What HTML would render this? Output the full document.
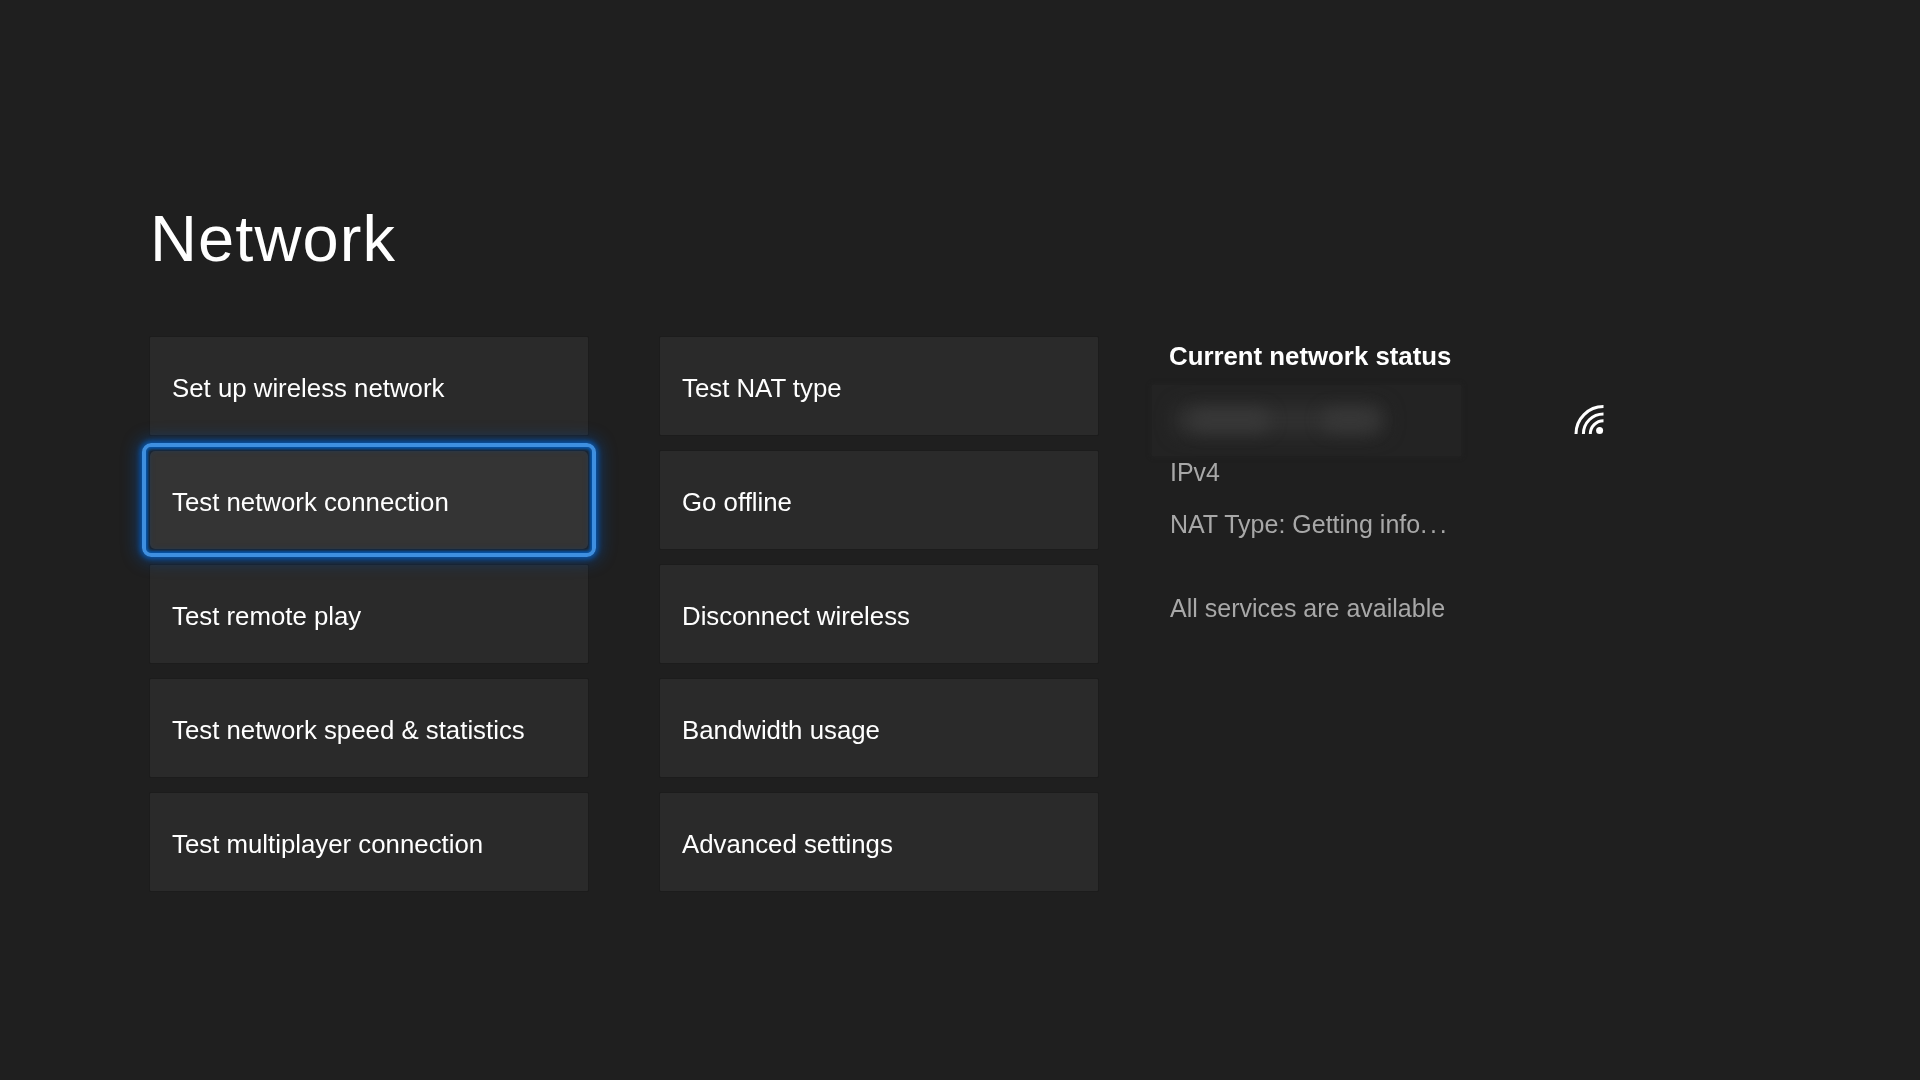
<!DOCTYPE html>
<html>
<head>
<meta charset="utf-8">
<style>
html,body{margin:0;padding:0;}
body{width:1920px;height:1080px;background:#1f1f1f;position:relative;overflow:hidden;font-family:"Liberation Sans",sans-serif;color:#fff;}
.t{position:absolute;white-space:nowrap;line-height:1;will-change:transform;}
.title{left:150px;top:205.5px;font-size:65px;letter-spacing:1.1px;}
.btn{position:absolute;width:438px;height:98px;background:#2a2a2a;border-radius:1px;box-shadow:0 0 0 1px #1c1c1c;}
.btn span{position:absolute;will-change:transform;left:22px;top:38.5px;font-size:25.8px;line-height:1;white-space:nowrap;}
.c1{left:150px;}
.c2{left:660px;}
.r1{top:337px}.r2{top:451px}.r3{top:565px}.r4{top:679px}.r5{top:793px}
.focus{background:#343434;border-radius:5px;}
.ring{position:absolute;left:142px;top:443px;width:446px;height:106px;border:4px solid #3e8fe0;border-radius:9px;box-shadow:0 0 5px 2px rgba(0,100,210,.7), 0 0 16px 5px rgba(0,85,180,.45), inset 0 0 3px 2px rgba(0,95,195,.85), inset 0 0 6px 3px rgba(0,75,160,.3);}
.hdr{left:1169px;top:344px;font-size:25.8px;font-weight:bold;}
.blurbox{position:absolute;left:1152px;top:385px;width:309px;height:71px;background:#232323;box-shadow:0 0 4px 1px #232323;}
.blob{position:absolute;left:22px;top:20px;width:212px;height:30px;background:#303030;filter:blur(9px);border-radius:10px;}
.blob2{position:absolute;left:38px;top:24px;width:80px;height:22px;background:#383838;filter:blur(8px);border-radius:10px;}
.blob3{position:absolute;left:170px;top:24px;width:55px;height:22px;background:#373737;filter:blur(8px);border-radius:10px;}
.gray{color:#a8a8a8;font-size:25px;}
</style>
</head>
<body>
<div class="t title">Network</div>

<div class="btn c1 r1"><span>Set up wireless network</span></div>
<div class="btn c1 r2 focus"><span>Test network connection</span></div>
<div class="btn c1 r3"><span>Test remote play</span></div>
<div class="btn c1 r4"><span>Test network speed &amp; statistics</span></div>
<div class="btn c1 r5"><span>Test multiplayer connection</span></div>

<div class="ring"></div>

<div class="btn c2 r1"><span>Test NAT type</span></div>
<div class="btn c2 r2"><span>Go offline</span></div>
<div class="btn c2 r3"><span>Disconnect wireless</span></div>
<div class="btn c2 r4"><span>Bandwidth usage</span></div>
<div class="btn c2 r5"><span>Advanced settings</span></div>

<div class="t hdr">Current network status</div>
<div class="blurbox"><div class="blob"></div><div class="blob2"></div><div class="blob3"></div></div>
<svg style="position:absolute;left:1570px;top:400px" width="40" height="40" viewBox="1570 400 40 40">
<g fill="none" stroke="#fff" stroke-width="3">
<path d="M1576 434 A27.4 27.4 0 0 1 1603.5 406.6"/>
<path d="M1583.4 434 A20.1 20.1 0 0 1 1603.5 413.9"/>
<path d="M1590.3 434 A13.2 13.2 0 0 1 1603.5 420.8"/>
</g>
<circle cx="1599.6" cy="430.4" r="3.5" fill="#fff"/>
</svg>
<div class="t gray" style="left:1170px;top:460px;">IPv4</div>
<div class="t gray" style="left:1170px;top:512px;">NAT Type: Getting info<span style="letter-spacing:2.8px">...</span></div>
<div class="t gray" style="left:1170px;top:596px;">All services are available</div>
</body>
</html>
